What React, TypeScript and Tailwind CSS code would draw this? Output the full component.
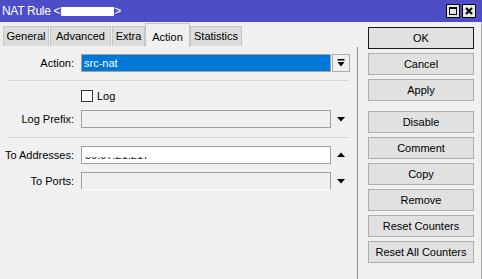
import React from "react";

const Tri = ({ up = false }: { up?: boolean }) => (
  <svg width="18" height="18" viewBox="0 0 18 18" className="block">
    {up ? <polygon points="5,11 13,11 9,6.5" fill="#000" /> : <polygon points="5,7 13,7 9,11.5" fill="#000" />}
  </svg>
);

const Row = ({ label, children, right }: { label: string; children: React.ReactNode; right?: React.ReactNode }) => (
  <div className="flex items-center h-[18px]">
    <div className="w-[74px] text-right text-black leading-none">{label}</div>
    <div className="ml-[7px]">{children}</div>
    <div className="ml-[1px] w-[18px] h-[18px]">{right}</div>
  </div>
);

const Btn = ({ children, def = false, extra = "" }: { children: React.ReactNode; def?: boolean; extra?: string }) => (
  <div
    className={`w-[106px] h-[22px] flex items-center justify-center bg-[#e1e1e1] border text-black leading-none ${
      def ? "border-[#1a1a1a]" : "border-[#adadad]"
    } ${extra}`}
  >
    {children}
  </div>
);

export default function App() {
  return (
    <div className="w-[482px] h-[279px] bg-[#f0f0f0] flex flex-col overflow-hidden font-['Liberation_Sans',Arial,sans-serif] text-[11px]">
      {/* title bar */}
      <div className="h-[22px] bg-[#4d4dc8] flex items-center pl-[2px] pr-[6px] text-white text-[12px] tracking-[-0.3px]">
        <span className="leading-none">NAT Rule &lt;</span>
        <span className="inline-block w-[53px] h-[9px] bg-white ml-[1px]" />
        <span className="leading-none">&gt;</span>
        <div className="flex-1" />
        <div className="w-[14px] h-[14px] bg-[#e8e8e8] border border-black flex items-center justify-center">
          <div className="w-[8px] h-[8px] border border-black border-t-2" />
        </div>
        <div className="w-[14px] h-[14px] bg-[#e8e8e8] border border-black flex items-center justify-center ml-[2px]">
          <svg width="8" height="8" viewBox="0 0 8 8">
            <path d="M1 1 L7 7 M7 1 L1 7" stroke="#000" strokeWidth="2" />
          </svg>
        </div>
      </div>
      {/* body */}
      <div className="flex-1 flex border-r border-[#a8a8a8]">
        <div className="w-[358px] flex flex-col">
          {/* tabs */}
          <div className="h-[25px] flex items-start pl-[3px] text-black">
            <div className="mt-[4px] h-[20px] w-[46px] bg-[#dcdcdc] border border-[#c6c6c6] border-b-0 flex items-center justify-center">General</div>
            <div className="mt-[4px] h-[20px] w-[61px] ml-[1px] bg-[#dcdcdc] border border-[#c6c6c6] border-b-0 flex items-center justify-center">Advanced</div>
            <div className="mt-[4px] h-[20px] w-[33px] ml-[1px] bg-[#dcdcdc] border border-[#c6c6c6] border-b-0 flex items-center justify-center">Extra</div>
            <div className="mt-[1px] h-[24px] w-[45px] bg-[#f0f0f0] border border-[#c6c6c6] border-b-0 flex items-start justify-center pt-[5px]">Action</div>
            <div className="mt-[4px] h-[20px] w-[52px] bg-[#dcdcdc] border border-[#c6c6c6] border-b-0 flex items-center justify-center">Statistics</div>
          </div>
          {/* panel */}
          <div className="flex-1 border-r border-[#8c8c8c] pt-[7px] flex flex-col">
            <Row
              label="Action:"
              right={
                <div className="w-[18px] h-[18px] border border-[#adadad] bg-[#f0f0f0] flex items-center justify-center">
                  <svg width="8" height="9" viewBox="0 0 8 9">
                    <rect x="0.5" y="0" width="7" height="1.5" fill="#000" />
                    <polygon points="0.5,3 7.5,3 4,7.5" fill="#000" />
                  </svg>
                </div>
              }
            >
              <div className="w-[250px] h-[18px] bg-[#0078d7] border border-[#a0a0a0] flex items-center pl-[2px] text-white leading-none">src-nat</div>
            </Row>
            <div className="mt-[8px] ml-[7px] w-[342px] h-[1px] bg-[#d5d5d5]" />
            <div className="mt-[9px] ml-[81px] flex items-center h-[12px]">
              <div className="w-[12px] h-[12px] bg-white border border-[#333333]" />
              <span className="ml-[4px] text-black leading-none">Log</span>
            </div>
            <div className="mt-[8px]">
              <Row label="Log Prefix:" right={<Tri />}>
                <div className="w-[250px] h-[18px] bg-[#f0f0f0] border border-[#a0a0a0]" />
              </Row>
            </div>
            <div className="mt-[9px] ml-[7px] w-[342px] h-[1px] bg-[#d5d5d5]" />
            <div className="mt-[8px]">
              <Row label="To Addresses:" right={<Tri up />}>
                <div className="relative w-[250px] h-[18px] bg-white border border-[#a0a0a0] flex items-center pl-[3px] text-[#222] leading-none overflow-hidden">
                  50.97.21.217
                  <div className="absolute left-0 top-0 w-[80px] h-[10px] bg-white" />
                </div>
              </Row>
            </div>
            <div className="mt-[8px]">
              <Row label="To Ports:" right={<Tri />}>
                <div className="w-[250px] h-[18px] bg-[#f0f0f0] border border-[#a0a0a0] border-b-white" />
              </Row>
            </div>
          </div>
        </div>
        {/* buttons */}
        <div className="flex-1 flex flex-col pl-[10px] pt-[5px] gap-[4px]">
          <Btn def>OK</Btn>
          <Btn>Cancel</Btn>
          <Btn>Apply</Btn>
          <Btn extra="mt-[6px]">Disable</Btn>
          <Btn>Comment</Btn>
          <Btn>Copy</Btn>
          <Btn>Remove</Btn>
          <Btn>Reset Counters</Btn>
          <Btn>Reset All Counters</Btn>
        </div>
      </div>
    </div>
  );
}
